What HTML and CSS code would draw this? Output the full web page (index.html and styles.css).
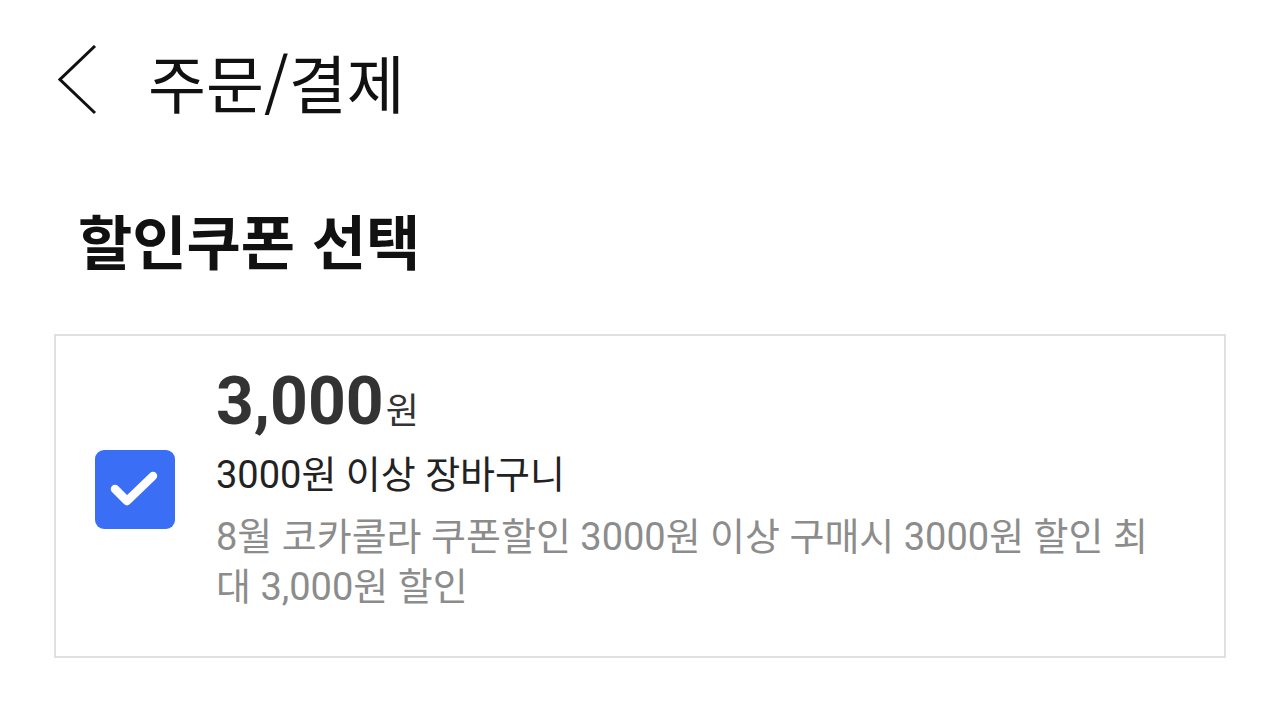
FILE: index.html
```html
<!DOCTYPE html>
<html lang="ko">
<head>
<meta charset="utf-8">
<link rel="stylesheet" href="styles.css">
</head>
<body>
<header class="topbar">
  <svg class="back" width="40" height="70" viewBox="0 0 40 70"><polyline points="37,1 2,34.5 37,68" fill="none" stroke="#111" stroke-width="3"/></svg>
  <h1 class="title">주문/결제</h1>
</header>
<h2 class="section">할인쿠폰 선택</h2>
<div class="card">
  <div class="check">
    <svg width="80" height="80" viewBox="0 0 80 80"><polyline points="20,39 32,51 58,26" fill="none" stroke="#fff" stroke-width="8.5" stroke-linecap="round" stroke-linejoin="round"/></svg>
  </div>
  <div class="info">
    <div class="amount"><span class="num">3,000</span><span class="won">원</span></div>
    <div class="name">3000원 이상 장바구니</div>
    <div class="desc">8월 코카콜라 쿠폰할인 3000원 이상 구매시 3000원 할인 최대 3,000원 할인</div>
  </div>
</div>
</body>
</html>
```
FILE: styles.css
```css
html, body {
  margin: 0;
  padding: 0;
  background: #fff;
}
body {
  font-family: "Roboto", "Noto Sans CJK KR", sans-serif;
  color: #111;
  width: 1280px;
  height: 720px;
  overflow: hidden;
}
.topbar {
  display: flex;
  align-items: center;
  height: 160px;
  padding-left: 58px;
  box-sizing: border-box;
}
.back {
  display: block;
}
.title {
  margin: 0 0 0 50px;
  font-family: "Noto Sans CJK KR", sans-serif;
  font-weight: 400;
  font-size: 63px;
  line-height: 1;
  color: #111;
}
.section {
  margin: 50px 0 0 78px;
  font-family: "Noto Sans CJK KR", sans-serif;
  font-weight: 700;
  font-size: 59px;
  line-height: 59px;
  color: #111;
}
.card {
  margin: 65px 54px 0 54px;
  border: 2px solid #e0e0e0;
  height: 324px;
  box-sizing: border-box;
  display: flex;
  align-items: flex-start;
  padding: 31px 60px 0 39px;
}
.check {
  flex: none;
  width: 80px;
  height: 79px;
  border-radius: 9px;
  background: #3a6ef4;
  margin-top: 83px;
}
.check svg {
  display: block;
}
.info {
  margin-left: 41px;
  flex: 1;
}
.amount {
  color: #333;
  height: 70px;
  line-height: 70px;
  display: flex;
  align-items: baseline;
}
.num {
  font-family: "Roboto", sans-serif;
  font-weight: 700;
  font-size: 66px;
}
.won {
  font-family: "Noto Sans CJK KR", sans-serif;
  font-size: 36px;
  margin-left: 2px;
}
.name {
  margin-top: 13px;
  font-size: 38px;
  line-height: 50px;
  height: 50px;
  color: #222;
}
.desc {
  margin-top: 12px;
  font-size: 38px;
  line-height: 50px;
  color: #8c8c8c;
}
```
